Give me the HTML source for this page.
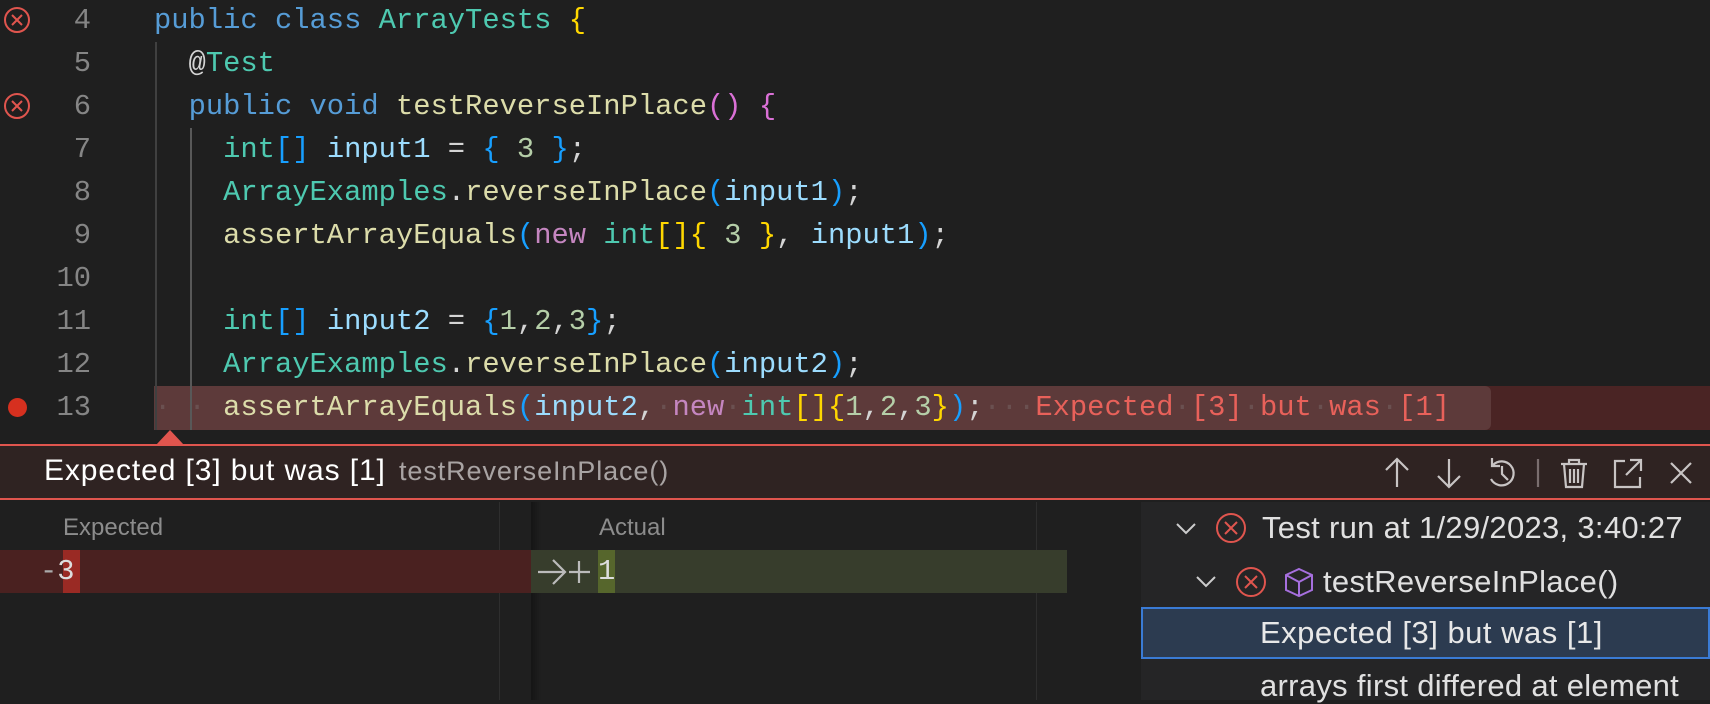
<!DOCTYPE html>
<html><head><meta charset="utf-8"><style>
*{margin:0;padding:0;box-sizing:border-box}
body{width:1710px;height:700px;background:#1f1f1f;overflow:hidden;position:relative;font-family:"Liberation Sans",sans-serif}
.ln{position:absolute;left:0;width:91px;text-align:right;font:28.8px/43px "Liberation Mono",monospace;color:#858585}
.cd{position:absolute;left:154px;font:28.8px/43px "Liberation Mono",monospace;white-space:pre;color:#d4d4d4}
.kw{color:#569cd6}.ty{color:#4ec9b0}.br1{color:#ffd700}.br2{color:#da70d6}.br3{color:#179fff}
.fn{color:#dcdcaa}.vr{color:#9cdcfe}.nm{color:#b5cea8}.nw{color:#c586c0}.dot{color:#6a5050}
.abs{position:absolute}
</style></head><body>
<div class="abs" style="left:154px;top:386px;width:1556px;height:44px;background:#4a2424"></div>
<div class="abs" style="left:154px;top:386px;width:1337px;height:44px;background:#5d3a3a;border-radius:0 6px 6px 0"></div>
<div class="abs" style="left:155px;top:42px;width:2px;height:388px;background:#404040"></div>
<div class="abs" style="left:190px;top:128px;width:2px;height:302px;background:#585858"></div>
<svg class="abs" style="left:3px;top:6px" width="28" height="28" viewBox="0 0 28 28"><circle cx="14" cy="14" r="12" fill="none" stroke="#e0554e" stroke-width="2"/><path d="M9 9L19 19M19 9L9 19" stroke="#e0554e" stroke-width="2"/></svg>
<svg class="abs" style="left:3px;top:92px" width="28" height="28" viewBox="0 0 28 28"><circle cx="14" cy="14" r="12" fill="none" stroke="#e0554e" stroke-width="2"/><path d="M9 9L19 19M19 9L9 19" stroke="#e0554e" stroke-width="2"/></svg>
<div class="abs" style="left:8px;top:398px;width:19px;height:19px;border-radius:50%;background:#d6301f"></div>

<div class="ln" style="top:-1px">4</div>
<div class="ln" style="top:42px">5</div>
<div class="ln" style="top:85px">6</div>
<div class="ln" style="top:128px">7</div>
<div class="ln" style="top:171px">8</div>
<div class="ln" style="top:214px">9</div>
<div class="ln" style="top:257px">10</div>
<div class="ln" style="top:300px">11</div>
<div class="ln" style="top:343px">12</div>
<div class="ln" style="top:386px">13</div>

<div class="cd" style="top:-1px"><span class="kw">public class</span> <span class="ty">ArrayTests</span> <span class="br1">{</span></div>
<div class="cd" style="top:42px">  @<span class="ty">Test</span></div>
<div class="cd" style="top:85px">  <span class="kw">public void</span> <span class="fn">testReverseInPlace</span><span class="br2">()</span> <span class="br2">{</span></div>
<div class="cd" style="top:128px">    <span class="ty">int</span><span class="br3">[]</span> <span class="vr">input1</span> = <span class="br3">{</span> <span class="nm">3</span> <span class="br3">}</span>;</div>
<div class="cd" style="top:171px">    <span class="ty">ArrayExamples</span>.<span class="fn">reverseInPlace</span><span class="br3">(</span><span class="vr">input1</span><span class="br3">)</span>;</div>
<div class="cd" style="top:214px">    <span class="fn">assertArrayEquals</span><span class="br3">(</span><span class="nw">new</span> <span class="ty">int</span><span class="br1">[]{</span> <span class="nm">3</span> <span class="br1">}</span>, <span class="vr">input1</span><span class="br3">)</span>;</div>
<div class="cd" style="top:300px">    <span class="ty">int</span><span class="br3">[]</span> <span class="vr">input2</span> = <span class="br3">{</span><span class="nm">1</span>,<span class="nm">2</span>,<span class="nm">3</span><span class="br3">}</span>;</div>
<div class="cd" style="top:343px">    <span class="ty">ArrayExamples</span>.<span class="fn">reverseInPlace</span><span class="br3">(</span><span class="vr">input2</span><span class="br3">)</span>;</div>
<div class="cd" style="top:386px"><span class="dot">· · </span><span class="fn">assertArrayEquals</span><span class="br3">(</span><span class="vr">input2</span>,<span class="dot">·</span><span class="nw">new</span><span class="dot">·</span><span class="ty">int</span><span class="br1">[]{</span><span class="nm">1</span>,<span class="nm">2</span>,<span class="nm">3</span><span class="br1">}</span><span class="br3">)</span>;<span class="dot">···</span><span style="color:#e8615a">Expected<span class="dot">·</span>[3]<span class="dot">·</span>but<span class="dot">·</span>was<span class="dot">·</span>[1]</span></div>

<svg class="abs" style="left:156px;top:430px" width="30" height="15"><path d="M0 15L14 0L28 15Z" fill="#e0554e"/></svg>
<div class="abs" style="left:0;top:444px;width:1710px;height:56px;background:#2f2322;border-top:2px solid #e0554e;border-bottom:2px solid #e0554e"></div>
<div class="abs" style="left:44px;top:454px;font-size:30px;letter-spacing:0.9px;color:#fff;white-space:nowrap">Expected [3] but was [1] <span style="font-size:27px;letter-spacing:0.9px;color:#a8a3a3;margin-left:4px">testReverseInPlace()</span></div>
<svg class="abs" style="left:1380px;top:455px" width="320" height="36" viewBox="0 0 320 36" fill="none" stroke="#c8c4c4" stroke-width="2.2">
<path d="M17 4V32M6 15L17 4L28 15"/>
<path d="M69 4V32M58 21L69 32L80 21"/>
<path d="M113 10A12 12 0 1 1 111 24M112 3V11H120M122 11V19L128 25" />
<path d="M158 4V32" stroke="#7a6e6e"/>
<path d="M181 9H207M189 9V5H199V9M184 9L186 32H202L204 9M190 14V28M194 14V28M198 14V28"/>
<path d="M245 6H235V32H260V22M250 5H261V16M261 5L246 20"/>
<path d="M291 8L311 28M311 8L291 28"/>
</svg>

<div class="abs" style="left:63px;top:514px;font-size:24px;color:#8c8c8c">Expected</div>
<div class="abs" style="left:599px;top:514px;font-size:24px;color:#8c8c8c">Actual</div>
<div class="abs" style="left:499px;top:502px;width:1px;height:198px;background:#2e2e2e"></div>
<div class="abs" style="left:1036px;top:502px;width:1px;height:198px;background:#2e2e2e"></div>
<div class="abs" style="left:531px;top:502px;width:10px;height:198px;background:linear-gradient(90deg,#151515,rgba(31,31,31,0))"></div>
<div class="abs" style="left:0;top:550px;width:531px;height:43px;background:#4a2120"></div>
<div class="abs" style="left:63px;top:550px;width:17px;height:43px;background:#9a2a24"></div>
<div class="abs" style="left:531px;top:550px;width:536px;height:43px;background:#373d2c"></div>
<div class="abs" style="left:598px;top:550px;width:17px;height:43px;background:#56662c"></div>
<div class="abs" style="left:40px;top:550px;font:28.8px/43px 'Liberation Mono',monospace;color:#ddd;white-space:pre"><span style="color:#aaa">-</span>3</div>
<svg class="abs" style="left:536px;top:556px" width="60" height="32" fill="none" stroke="#bbb" stroke-width="2.2"><path d="M2 16H28M17 4L29 16L17 28"/><path d="M43 5V27M33 16H54"/></svg>
<div class="abs" style="left:598px;top:550px;font:28.8px/43px 'Liberation Mono',monospace;color:#ddd">1</div>

<div class="abs" style="left:1141px;top:502px;width:569px;height:198px;background:#252526"></div>
<div class="abs" style="left:1141px;top:607px;width:569px;height:52px;background:#2c3b50;border:2px solid #3a7bd5"></div>
<svg class="abs" style="left:1141px;top:502px" width="200" height="110" fill="none" stroke-width="2">
<path d="M36 22L45 31L54 22" stroke="#ccc"/>
<circle cx="90" cy="26" r="14" stroke="#e0554e"/><path d="M84 20L96 32M96 20L84 32" stroke="#e0554e"/>
<path d="M56 75L65 84L74 75" stroke="#ccc"/>
<circle cx="110" cy="80" r="14" stroke="#e0554e"/><path d="M104 74L116 86M116 74L104 86" stroke="#e0554e"/>
<path d="M158 67L171 73V88L158 94L145 88V73ZM145 73L158 80L171 73M158 80V94" stroke="#a66fde"/>
</svg>
<div class="abs" style="left:1262px;top:510px;font-size:31px;letter-spacing:0.3px;color:#e0e0e0;white-space:nowrap">Test run at 1/29/2023, 3:40:27</div>
<div class="abs" style="left:1323px;top:564px;font-size:31px;letter-spacing:0.3px;color:#e0e0e0;white-space:nowrap">testReverseInPlace()</div>
<div class="abs" style="left:1260px;top:615px;font-size:31px;letter-spacing:0.5px;color:#e8e8e8;white-space:nowrap">Expected [3] but was [1]</div>
<div class="abs" style="left:1260px;top:668px;font-size:31px;letter-spacing:0.3px;color:#e0e0e0;white-space:nowrap">arrays first differed at element</div>
</body></html>
